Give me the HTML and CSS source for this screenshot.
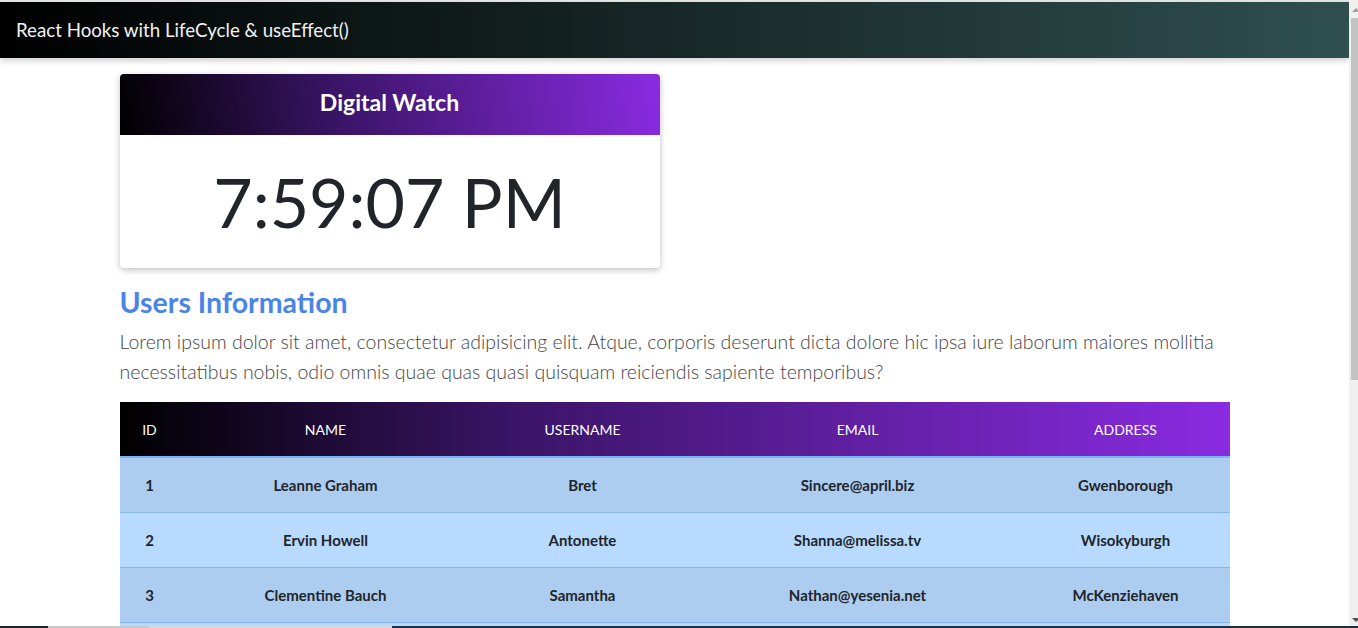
FILE: index.html
```html
<!DOCTYPE html>
<html lang="en">
<head>
<meta charset="utf-8">
<title>React Hooks with LifeCycle &amp; useEffect()</title>
<link rel="stylesheet" href="styles.css">
</head>
<body>
<div class="page">
  <div class="top-strip"></div>
  <nav class="navbar">
    <span class="brand">React Hooks with LifeCycle &amp; useEffect()</span>
  </nav>
  <main class="container">
    <div class="watch-row">
      <div class="card">
        <div class="card-header">Digital Watch</div>
        <div class="card-body">
          <span class="clock">7:59:07 PM</span>
        </div>
      </div>
    </div>
    <h3 class="section-title">Users Information</h3>
    <p class="lead">Lorem ipsum dolor sit amet, consectetur adipisicing elit. Atque, corporis deserunt dicta dolore hic ipsa iure laborum maiores mollitia necessitatibus nobis, odio omnis quae quas quasi quisquam reiciendis sapiente temporibus?</p>
    <table class="users">
      <colgroup>
        <col class="c-id"><col class="c-name"><col class="c-user"><col class="c-email"><col class="c-addr">
      </colgroup>
      <thead>
        <tr><th>ID</th><th>NAME</th><th>USERNAME</th><th>EMAIL</th><th>ADDRESS</th></tr>
      </thead>
      <tbody>
        <tr><td>1</td><td>Leanne Graham</td><td>Bret</td><td>Sincere@april.biz</td><td>Gwenborough</td></tr>
        <tr><td>2</td><td>Ervin Howell</td><td>Antonette</td><td>Shanna@melissa.tv</td><td>Wisokyburgh</td></tr>
        <tr><td>3</td><td>Clementine Bauch</td><td>Samantha</td><td>Nathan@yesenia.net</td><td>McKenziehaven</td></tr>
        <tr><td>4</td><td>Patricia Lebsack</td><td>Karianne</td><td>Julianne.OConner@kory.org</td><td>South Elvis</td></tr>
        <tr><td>5</td><td>Chelsey Dietrich</td><td>Kamren</td><td>Lucio_Hettinger@annie.ca</td><td>Roscoeview</td></tr>
      </tbody>
    </table>
  </main>
</div>
<div class="scrollbar"><div class="arrow-up"></div><div class="thumb"></div><div class="arrow-down"></div></div>
<div class="taskbar-edge"><span class="tb1"></span><span class="tb2"></span><span class="tb3"></span><span class="tb4"></span></div>
</body>
</html>
```
FILE: styles.css
```css
html, body {
  margin: 0;
  padding: 0;
  height: 100%;
  overflow: hidden;
  background: #fff;
}
body {
  font-family: Lato, "Open Sans", sans-serif;
  color: #212529;
}
.page {
  width: 1349px;
  height: 100%;
  overflow: hidden;
}
.top-strip {
  height: 2px;
  background: #e6e6e6;
}
.navbar {
  height: 56px;
  display: flex;
  align-items: center;
  padding: 0 16px;
  background: linear-gradient(to right, #000 0%, #2f4f4f 100%);
  box-shadow: 0 3px 6px rgba(0, 0, 0, 0.18);
  position: relative;
  z-index: 2;
}
.brand {
  color: #f2f2f2;
  font-size: 18.7px;
  font-weight: 400;
}
.container {
  width: 1110px;
  margin: 0 auto;
  padding-top: 16px;
}
.watch-row {
  display: flex;
}
.card {
  width: 540px;
  border-radius: 4px;
  overflow: hidden;
  background: #fff;
  box-shadow: 0 2px 6px rgba(0, 0, 0, 0.25);
}
.card-header {
  height: 61px;
  padding-bottom: 6px;
  box-sizing: border-box;
  display: flex;
  align-items: center;
  justify-content: center;
  color: #fff;
  font-size: 23px;
  font-weight: 700;
  background: linear-gradient(80deg, #000 0%, #3a1466 40%, #8a2be2 100%);
}
.card-body {
  height: 133px;
  display: flex;
  align-items: center;
  justify-content: center;
}
.clock {
  font-size: 68px;
  font-weight: 400;
  color: #212529;
}
.section-title {
  margin: 17px 0 8px;
  font-size: 28.5px;
  font-weight: 700;
  color: #4a84e6;
  line-height: 1.2;
}
.lead {
  margin: 0 0 15px;
  font-size: 19.5px;
  font-weight: 300;
  line-height: 30px;
  color: #454545;
}
.users {
  width: 1110px;
  border-collapse: collapse;
  table-layout: fixed;
}
.c-id { width: 60px; }
.c-name { width: 292px; }
.c-user { width: 222px; }
.c-email { width: 328px; }
.c-addr { width: 208px; }
.users thead tr {
  background: linear-gradient(to right, #000 0%, #3a1466 35%, #8a2be2 100%);
}
.users th {
  height: 54px;
  padding: 0;
  color: #fff;
  font-size: 14px;
  font-weight: 400;
  text-align: center;
  border-bottom: 2px solid #7ab3f5;
}
.users td {
  height: 54px;
  padding: 0;
  font-size: 15px;
  font-weight: 700;
  text-align: center;
  color: #212529;
  border-top: 1px solid #86b6ee;
}
.users tbody tr:nth-child(odd) { background: #accdf0; }
.users tbody tr:nth-child(even) { background: #b8daff; }
.users tbody tr:first-child td { border-top: 0; }

.scrollbar {
  position: fixed;
  top: 0;
  right: 0;
  width: 9px;
  height: 100%;
  background: #f0f0f0;
}
.thumb {
  position: absolute;
  top: 18px;
  left: 2px;
  right: 0;
  height: 362px;
  background: #c2c2c2;
}
.arrow-up {
  position: absolute;
  top: 8px;
  left: 3px;
  border-left: 4px solid transparent;
  border-right: 4px solid transparent;
  border-bottom: 4px solid #a3a3a3;
}
.arrow-down {
  position: absolute;
  bottom: 6px;
  left: 3px;
  border-left: 4px solid transparent;
  border-right: 4px solid transparent;
  border-top: 4px solid #505050;
}
.taskbar-edge {
  position: fixed;
  left: 0;
  right: 0;
  bottom: 0;
  height: 2px;
  display: flex;
  background: #1d2b36;
}
.tb1 { width: 48px; background: #1c2732; }
.tb2 { width: 102px; background: #c9c9c9; }
.tb3 { width: 242px; background: #d8d8d8; }
.tb4 { flex: 1; background: #1e3040; }
```
